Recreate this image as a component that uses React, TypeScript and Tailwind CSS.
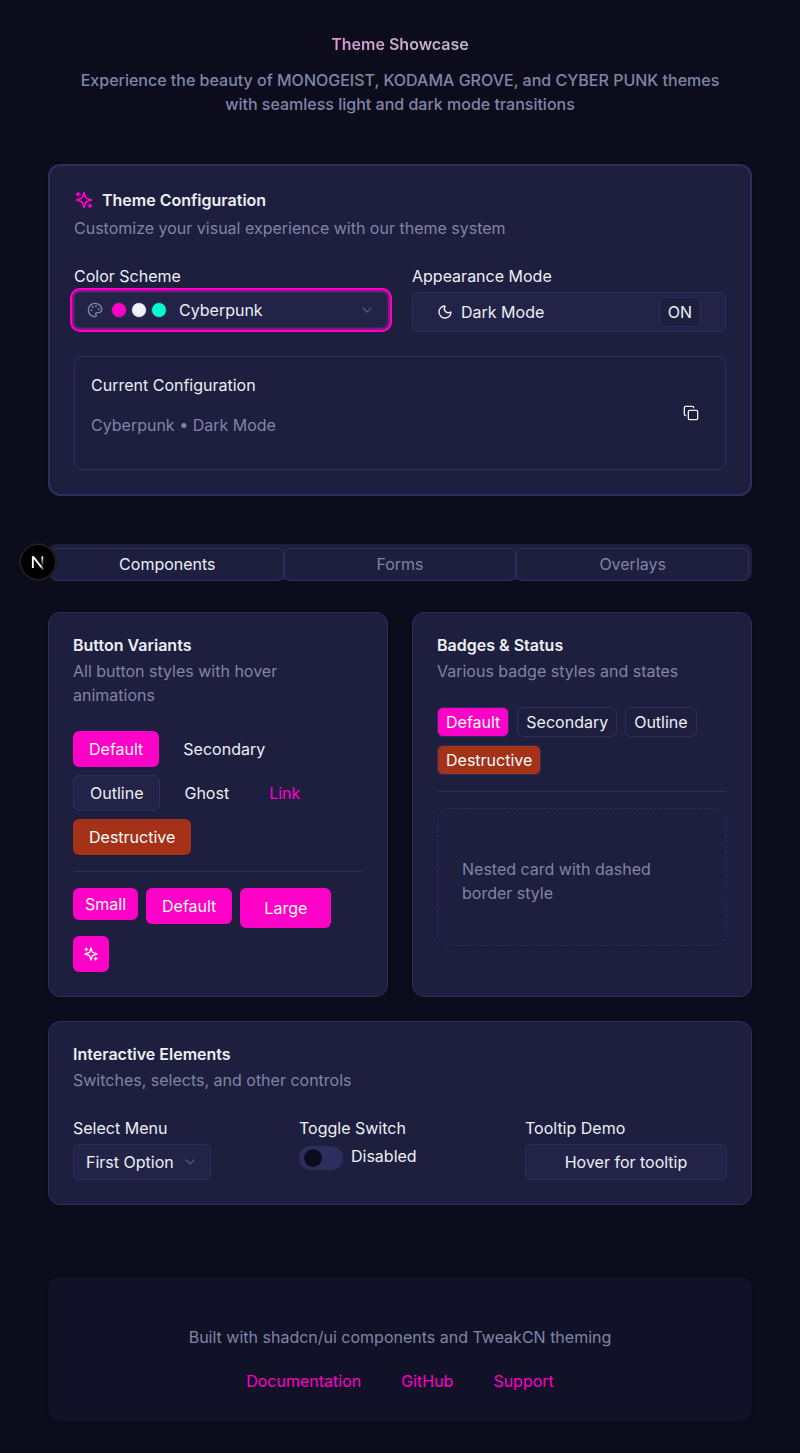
import { useState } from "react";
import type { ReactNode, ButtonHTMLAttributes } from "react";
import { ChevronDown, Copy, Moon, Palette } from "lucide-react";
import clsx from "clsx";

type Variant = "default" | "secondary" | "outline" | "ghost" | "link" | "destructive";
type Size = "sm" | "md" | "lg" | "icon";

const buttonVariants: Record<Variant, string> = {
  default: "bg-[#ff00c8] text-white shadow-xs",
  secondary: "bg-[#1e1e3f] text-[#eceff4] shadow-xs",
  outline: "border border-[#2e2e5e] bg-[#232348] text-[#eceff4] shadow-xs",
  ghost: "text-[#eceff4]",
  link: "text-[#ff00c8] underline-offset-4 hover:underline",
  destructive: "bg-[#a53119] text-white shadow-xs",
};

const buttonSizes: Record<Size, string> = {
  sm: "h-8 px-3",
  md: "h-9 px-4",
  lg: "h-10 px-6",
  icon: "size-9",
};

type ButtonProps = ButtonHTMLAttributes<HTMLButtonElement> & { variant?: Variant; size?: Size };

function Button({ variant = "default", size = "md", className, ...props }: ButtonProps) {
  return (
    <button
      type="button"
      className={clsx(
        "inline-flex items-center justify-center gap-2 whitespace-nowrap rounded-md",
        buttonVariants[variant],
        buttonSizes[size],
        className,
      )}
      {...props}
    />
  );
}

function SparklesIcon({ className }: { className: string }) {
  return (
    <svg
      viewBox="0 0 24 24"
      fill="none"
      stroke="currentColor"
      strokeWidth="2"
      strokeLinecap="round"
      strokeLinejoin="round"
      className={className}
      aria-hidden="true"
    >
      <path d="m12 3-1.912 5.813a2 2 0 0 1-1.275 1.275L3 12l5.813 1.912a2 2 0 0 1 1.275 1.275L12 21l1.912-5.813a2 2 0 0 1 1.275-1.275L21 12l-5.813-1.912a2 2 0 0 1-1.275-1.275L12 3Z" />
      <path d="M5 3v4" />
      <path d="M19 17v4" />
      <path d="M3 5h4" />
      <path d="M17 19h4" />
    </svg>
  );
}

const badgeVariants = {
  default: "bg-[#ff00c8] text-white",
  outline: "bg-[#1e1e3f] text-[#eceff4]",
  destructive: "bg-[#a53119] text-white",
};

function Badge({ variant = "outline", children }: { variant?: keyof typeof badgeVariants; children: ReactNode }) {
  return (
    <span className={clsx("rounded-md border border-[#2e2e5e] px-2 py-0.5", badgeVariants[variant])}>
      {children}
    </span>
  );
}

function Card({ title, description, children }: { title: string; description: string; children: ReactNode }) {
  return (
    <section className="flex flex-col gap-6 rounded-xl border border-[#2e2e5e] bg-[#1e1e3f] p-6 shadow-sm">
      <div className="flex flex-col gap-1.5">
        <h2 className="font-semibold leading-none">{title}</h2>
        <p className="text-[#8085a6]">{description}</p>
      </div>
      {children}
    </section>
  );
}

const schemes = [
  { name: "Cyberpunk", dots: ["bg-[#ff00c8]", "bg-[#f0f0ff]", "bg-[#00ffcc]"] },
  { name: "Monogeist", dots: ["bg-[#737373]", "bg-[#262626]", "bg-[#e5e5e5]"] },
  { name: "Kodama Grove", dots: ["bg-[#8d9d4f]", "bg-[#decea0]", "bg-[#dbc894]"] },
];

const tabs = ["Components", "Forms", "Overlays"];

function ThemeConfiguration() {
  const [scheme, setScheme] = useState("Cyberpunk");
  const [dark, setDark] = useState(true);
  const active = schemes.find((s) => s.name === scheme) ?? schemes[0];
  const mode = dark ? "Dark Mode" : "Light Mode";

  return (
    <section className="mb-12 flex flex-col gap-6 rounded-xl border-2 border-[#2e2e5e] bg-[#1e1e3f] p-6 shadow-sm">
      <div className="flex flex-col gap-1.5">
        <h2 className="flex items-center gap-2 font-semibold leading-none">
          <SparklesIcon className="size-5 text-[#ff00c8]" />
          Theme Configuration
        </h2>
        <p className="text-[#8085a6]">Customize your visual experience with our theme system</p>
      </div>

      <div className="grid grid-cols-2 items-start gap-6">
        <div className="flex flex-col gap-1">
          <label htmlFor="scheme">Color Scheme</label>
          <div className="flex h-9 items-center rounded-md border border-[#2e2e5e] bg-[#232348] px-3 ring-[3px] ring-[#ff00c8]/50 outline-2 outline-offset-2 outline-[#ff00c8]">
            <Palette className="mr-2 size-4 text-[#8085a6]" />
            <span className="mr-3 flex gap-1">
              {active.dots.map((dot) => (
                <span key={dot} className={clsx("size-4 rounded-full border border-[#2e2e5e]", dot)} />
              ))}
            </span>
            <select
              id="scheme"
              value={scheme}
              onChange={(e) => setScheme(e.target.value)}
              className="min-w-0 flex-1 appearance-none bg-transparent outline-none"
            >
              {schemes.map((s) => (
                <option key={s.name}>{s.name}</option>
              ))}
            </select>
            <ChevronDown className="size-4 text-[#8085a6] opacity-50" />
          </div>
        </div>

        <div className="flex flex-col gap-1">
          <label htmlFor="mode">Appearance Mode</label>
          <Button id="mode" variant="outline" size="lg" className="w-full" onClick={() => setDark(!dark)}>
            <Moon className="size-4" />
            <span className="flex-1 text-left">{mode}</span>
            <Badge>{dark ? "ON" : "OFF"}</Badge>
          </Button>
        </div>
      </div>

      <div className="flex items-center justify-between rounded-lg border border-[#2e2e5e] p-4">
        <div className="flex flex-col gap-4 pb-4">
          <p>Current Configuration</p>
          <p className="text-[#8085a6]">
            {scheme} • {mode}
          </p>
        </div>
        <Button variant="ghost" size="icon" aria-label="Copy configuration">
          <Copy className="size-4" />
        </Button>
      </div>
    </section>
  );
}

export default function App() {
  const [tab, setTab] = useState("Components");
  const [on, setOn] = useState(false);

  return (
    <div className="min-h-screen bg-[#0c0c1d] px-12 py-8 font-['Inter',sans-serif] text-base text-[#eceff4]">
      <header className="mb-12 flex flex-col gap-3 text-center font-medium">
        <h1 className="bg-linear-to-r from-[#ff00c8] to-[#00ffcc] bg-clip-text font-semibold text-transparent">
          Theme Showcase
        </h1>
        <p className="mx-auto max-w-2xl text-[#8085a6]">
          Experience the beauty of MONOGEIST, KODAMA GROVE, and CYBER PUNK themes with seamless light and dark mode
          transitions
        </p>
      </header>

      <ThemeConfiguration />

      <div role="tablist" className="mb-8 grid h-9 grid-cols-3 rounded-lg bg-[#1e1e3f] px-[3px] pt-1">
        {tabs.map((name) => (
          <button
            key={name}
            type="button"
            role="tab"
            aria-selected={tab === name}
            onClick={() => setTab(name)}
            className={clsx(
              "h-[33px] rounded-md border border-[#2e2e5e] bg-[#1e1e3f] pb-px",
              tab === name ? "text-[#eceff4]" : "text-[#8085a6]",
            )}
          >
            {name}
          </button>
        ))}
      </div>

      <main className="flex flex-col gap-6">
        <div className="grid grid-cols-2 gap-6">
          <Card title="Button Variants" description="All button styles with hover animations">
            <div className="flex flex-col gap-4">
              <div className="flex flex-wrap gap-2">
                <Button>Default</Button>
                <Button variant="secondary">Secondary</Button>
                <Button variant="outline">Outline</Button>
                <Button variant="ghost">Ghost</Button>
                <Button variant="link">Link</Button>
                <Button variant="destructive">Destructive</Button>
              </div>
              <hr className="border-[#2e2e5e]" />
              <div className="flex flex-wrap items-start gap-2">
                <Button size="sm">Small</Button>
                <Button>Default</Button>
                <Button size="lg">Large</Button>
                <Button size="icon" aria-label="Sparkles">
                  <SparklesIcon className="size-4" />
                </Button>
              </div>
            </div>
          </Card>

          <Card title="Badges & Status" description="Various badge styles and states">
            <div className="flex flex-col gap-4">
              <div className="flex flex-wrap gap-2">
                <Badge variant="default">Default</Badge>
                <Badge>Secondary</Badge>
                <Badge>Outline</Badge>
                <Badge variant="destructive">Destructive</Badge>
              </div>
              <hr className="border-[#2e2e5e]" />
              <div className="rounded-xl border border-dashed border-[#2e2e5e] px-6 pt-12 pb-10 shadow-sm">
                <p className="text-[#8085a6]">Nested card with dashed border style</p>
              </div>
            </div>
          </Card>
        </div>

        <Card title="Interactive Elements" description="Switches, selects, and other controls">
          <div className="grid grid-cols-3 gap-6">
            <div className="flex flex-col items-start gap-1">
              <label htmlFor="menu">Select Menu</label>
              <div className="flex h-9 items-center gap-2 rounded-md border border-[#2e2e5e] bg-[#232348] px-3 shadow-xs">
                <select id="menu" className="appearance-none bg-transparent outline-none">
                  <option>First Option</option>
                  <option>Second</option>
                  <option>Third</option>
                </select>
                <ChevronDown className="size-4 text-[#8085a6] opacity-50" />
              </div>
            </div>

            <div className="flex flex-col gap-1">
              <span>Toggle Switch</span>
              <div className="flex items-start gap-2">
                <input
                  id="toggle"
                  type="checkbox"
                  role="switch"
                  checked={on}
                  onChange={() => setOn(!on)}
                  className="mt-0.5 flex h-6 w-11 shrink-0 appearance-none items-center rounded-full bg-[#2e2e5e] px-[5px] before:size-[18px] before:rounded-full before:bg-[#0c0c1d] checked:justify-end checked:bg-[#ff00c8]"
                />
                <label htmlFor="toggle">{on ? "Enabled" : "Disabled"}</label>
              </div>
            </div>

            <div className="flex flex-col gap-1">
              <span>Tooltip Demo</span>
              <Button variant="outline" title="Tooltip">
                Hover for tooltip
              </Button>
            </div>
          </div>
        </Card>
      </main>

      <footer className="mt-18 flex flex-col items-center gap-4 rounded-xl bg-[#111127] px-6 pt-12 pb-6 shadow-sm">
        <p className="text-[#8085a6]">Built with shadcn/ui components and TweakCN theming</p>
        <nav className="flex gap-4">
          {["Documentation", "GitHub", "Support"].map((name) => (
            <a key={name} href="#" className="flex h-8 items-center px-3 text-[#ff00c8]">
              {name}
            </a>
          ))}
        </nav>
      </footer>

      <button
        type="button"
        aria-label="Open developer tools"
        className="absolute top-[544px] left-5 flex size-9 items-center justify-center rounded-full bg-black ring-1 ring-[#171717] inset-ring inset-ring-white/15"
      >
        <svg viewBox="0 0 36 36" className="size-9" fill="none" aria-hidden="true">
          <defs>
            <linearGradient id="diagonal" x1="9.956" y1="11.123" x2="15.478" y2="17.967" gradientUnits="userSpaceOnUse">
              <stop stopColor="#fff" />
              <stop offset="0.604" stopColor="#fff" stopOpacity="0" />
              <stop offset="1" stopColor="#fff" stopOpacity="0" />
            </linearGradient>
            <linearGradient id="stem" x1="11.822" y1="1.4" x2="11.792" y2="11.6" gradientUnits="userSpaceOnUse">
              <stop stopColor="#fff" />
              <stop offset="1" stopColor="#fff" stopOpacity="0" />
            </linearGradient>
          </defs>
          <g transform="translate(10.5 11)">
            <path d="M13.3 15.2 2.34 1.4V13" stroke="url(#diagonal)" strokeWidth="1.86" strokeLinejoin="bevel" />
            <path d="M11.825 1.4V13" stroke="url(#stem)" strokeWidth="1.86" />
          </g>
        </svg>
      </button>
    </div>
  );
}
